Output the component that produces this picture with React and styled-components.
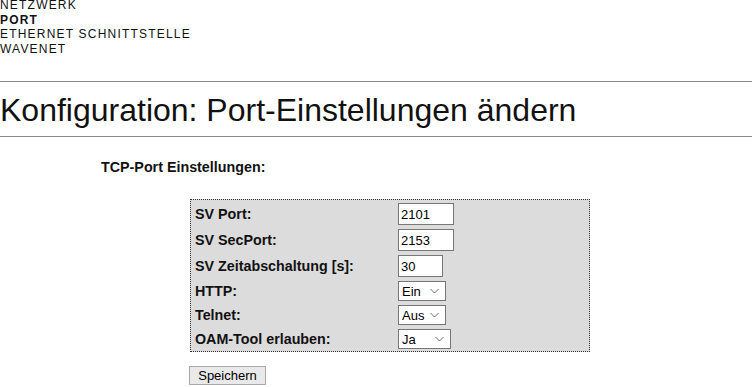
import React, { useState } from 'react'
import styled, { createGlobalStyle } from 'styled-components';

const GlobalStyle = createGlobalStyle`
  body {
    margin: 0;
    background: #fff;
    color: #111;
    font-family: "Liberation Sans", Arial, sans-serif;
  }
`;

const navItems = [
  {id: 1, label: 'NETZWERK'},
  {id: 2, label: 'PORT', active: true},
  {id: 3, label: 'ETHERNET SCHNITTSTELLE'},
  {id: 4, label: 'WAVENET'},
];

const ChevronIcon = () => (
  <svg width="9" height="6" viewBox="0 0 9 6" aria-hidden="true">
    <path fill="none" stroke="#6d6d6d" strokeWidth="1" d="M0.5 1 4.5 5 8.5 1"/>
  </svg>
);

const SelectBox = ({width, value, options}) => {
  const [selected, setSelected] = useState(value);
  return (
    <SelectWrap width={width}>
      <NativeSelect value={selected} onChange={(e) => setSelected(e.target.value)}>
        {options.map((opt) => <option key={opt}>{opt}</option>)}
      </NativeSelect>
      <ChevronIcon />
    </SelectWrap>
  );
};

const App = () => {
  return (
    <>
      <GlobalStyle />
      <Nav>
        {navItems.map((item) => (
          <NavItem key={item.id} active={item.active}>{item.label}</NavItem>
        ))}
      </Nav>
      <Rule top={25} />
      <Heading>Konfiguration: Port-Einstellungen ändern</Heading>
      <Rule />
      <Section>
        <SectionTitle>TCP-Port Einstellungen:</SectionTitle>
        <FormBox>
          <Label>SV Port:</Label>
          <Field><TextInput width={56} defaultValue="2101" /></Field>
          <Label>SV SecPort:</Label>
          <Field><TextInput width={56} defaultValue="2153" /></Field>
          <Label>SV Zeitabschaltung [s]:</Label>
          <Field><TextInput width={45} defaultValue="30" /></Field>
          <Label>HTTP:</Label>
          <Field><SelectBox width={48} value="Ein" options={['Ein', 'Aus']} /></Field>
          <Label>Telnet:</Label>
          <Field><SelectBox width={48} value="Aus" options={['Ein', 'Aus']} /></Field>
          <Label>OAM-Tool erlauben:</Label>
          <Field><SelectBox width={53} value="Ja" options={['Ja', 'Nein']} /></Field>
        </FormBox>
        <SaveButton>Speichern</SaveButton>
      </Section>
    </>
  )
}

const Nav = styled.div`
  display: flex;
  flex-direction: column;
  margin-top: -2px;
`;

const NavItem = styled.a`
  display: block;
  font-size: 12px;
  line-height: 14.5px;
  letter-spacing: 1.2px;
  color: #111;
  font-weight: ${(props) => (props.active ? 700 : 400)};
  text-decoration: none;
  cursor: pointer;
`;

const Rule = styled.div`
  margin-top: ${(props) => props.top || 0}px;
  border-top: 1px solid #8a8a8a;
`;

const Heading = styled.h1`
  margin: 0;
  padding: 10px 0 7px 0;
  font-size: 32px;
  font-weight: 400;
  line-height: 37px;
  color: #111;
`;

const Section = styled.div`
  display: flex;
  flex-direction: column;
  align-items: flex-start;
  padding-top: 22px;
`;

const SectionTitle = styled.div`
  margin-left: 101px;
  font-size: 14.3px;
  font-weight: 700;
  line-height: 16px;
`;

const FormBox = styled.div`
  display: grid;
  grid-template-columns: 203px 1fr;
  row-gap: 4px;
  align-items: center;
  width: 391px;
  margin: 24px 0 0 190px;
  padding: 3px 3px 2px 4px;
  border: 1px dotted #333;
  background-color: #dcdcdc;
`;

const Label = styled.div`
  font-size: 14.3px;
  font-weight: 700;
  color: #111;
`;

const Field = styled.div`
  display: flex;
  align-items: center;
`;

const TextInput = styled.input`
  box-sizing: border-box;
  width: ${(props) => props.width}px;
  height: 22px;
  padding: 0 2px;
  border: 1px solid #777;
  background: #fff;
  font-family: "Liberation Sans", Arial, sans-serif;
  font-size: 13px;
  color: #000;
  outline: none;
`;

const SelectWrap = styled.div`
  box-sizing: border-box;
  display: flex;
  align-items: center;
  width: ${(props) => props.width}px;
  height: 20px;
  padding-right: 6px;
  border: 1px solid #777;
  background: #fff;
`;

const NativeSelect = styled.select`
  appearance: none;
  -webkit-appearance: none;
  flex: 1;
  min-width: 0;
  height: 100%;
  padding: 0 0 0 3px;
  border: none;
  background: transparent;
  font-family: "Liberation Sans", Arial, sans-serif;
  font-size: 13px;
  color: #000;
  outline: none;
  cursor: pointer;
`;

const SaveButton = styled.button`
  box-sizing: border-box;
  width: 77px;
  height: 19px;
  margin: 14px 0 0 189px;
  padding: 0;
  border: 1px solid #aaa;
  background-color: #e9e9e9;
  font-family: "Liberation Sans", Arial, sans-serif;
  font-size: 13px;
  color: #000;
  cursor: pointer;
`;

export default App
